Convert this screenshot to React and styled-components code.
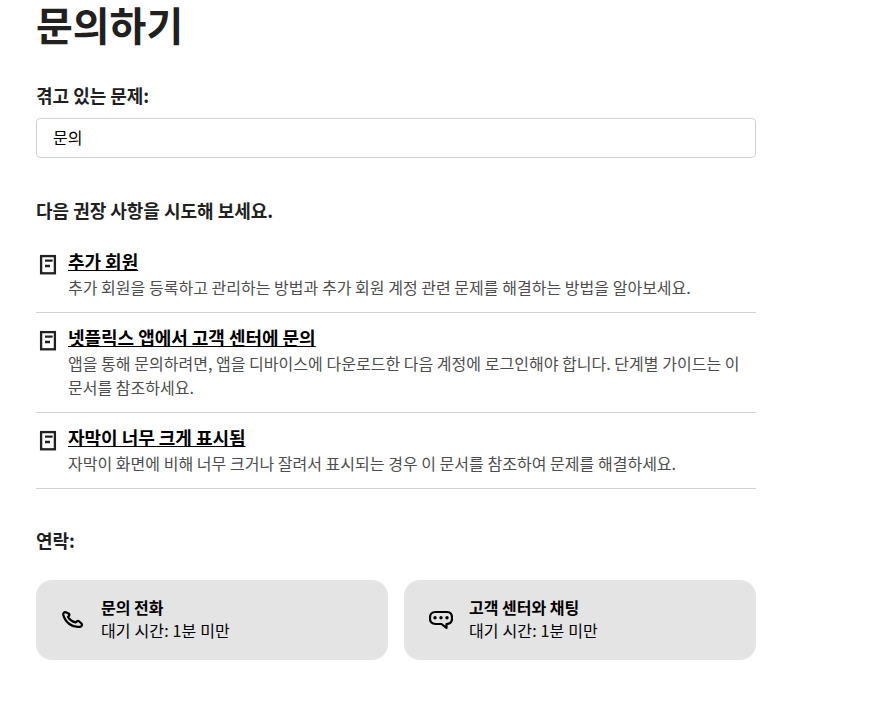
import React from 'react';
import styled, { createGlobalStyle } from 'styled-components';

const GlobalStyle = createGlobalStyle`
  body {
    margin: 0;
    background: #fff;
    font-family: "Noto Sans CJK KR", "Liberation Sans", sans-serif;
    color: #221f1f;
  }
`;

const Page = styled.main`
  width: 720px;
  margin-left: 36px;
`;

const Title = styled.h1`
  margin: 0;
  height: 52px;
  font-size: 40px;
  line-height: 48px;
  font-weight: 700;
`;

const Label = styled.h2`
  margin: ${(p) => p.$top}px 0 0;
  font-size: 18px;
  line-height: 24px;
  font-weight: 700;
  letter-spacing: -0.02px;
`;

const SearchBox = styled.div`
  box-sizing: border-box;
  height: 40px;
  margin-top: 11px;
  padding: 0 16px 2px;
  display: flex;
  align-items: center;
  border: 1px solid #d2d2d2;
  border-radius: 4px;
  font-size: 16px;
  color: #000;
`;

const ArticleList = styled.ul`
  list-style: none;
  margin: 15px 0 0;
  padding: 0;
`;

const Article = styled.li`
  display: flex;
  gap: 8px;
  padding: 11px 0 13px;
  border-bottom: 1px solid #d2d2d2;
`;

const DocIcon = styled.svg`
  flex: none;
  width: 24px;
  height: 24px;
  margin-top: 4px;
`;

const ArticleBody = styled.div`
  flex: 1;
  min-width: 0;
`;

const ArticleTitle = styled.a`
  display: block;
  width: fit-content;
  font-size: 18px;
  line-height: 27px;
  font-weight: 700;
  letter-spacing: -0.03px;
  color: #000;
  text-decoration: underline;
`;

const ArticleText = styled.p`
  margin: 0;
  font-size: 16px;
  line-height: 24px;
  letter-spacing: 0.025px;
  color: #4d4d4d;
`;

const ContactRow = styled.div`
  display: grid;
  grid-template-columns: 1fr 1fr;
  gap: 16px;
  margin-top: 28px;
`;

const ContactCard = styled.div`
  height: 80px;
  display: flex;
  align-items: center;
  gap: 16px;
  padding-left: 25px;
  border-radius: 16px;
  background: #e4e4e4;
`;

const ContactIcon = styled.svg`
  flex: none;
  width: 24px;
  height: 24px;
`;

const ContactText = styled.div`
  padding-bottom: 2px;
`;

const ContactName = styled.div`
  font-size: 16px;
  line-height: 23px;
  font-weight: 700;
  color: #000;
`;

const ContactWait = styled.div`
  font-size: 16px;
  line-height: 23px;
  letter-spacing: 0.15px;
  color: #000;
`;

const articles = [
  {
    title: '추가 회원',
    text: '추가 회원을 등록하고 관리하는 방법과 추가 회원 계정 관련 문제를 해결하는 방법을 알아보세요.',
  },
  {
    title: '넷플릭스 앱에서 고객 센터에 문의',
    text: '앱을 통해 문의하려면, 앱을 디바이스에 다운로드한 다음 계정에 로그인해야 합니다. 단계별 가이드는 이 문서를 참조하세요.',
  },
  {
    title: '자막이 너무 크게 표시됨',
    text: '자막이 화면에 비해 너무 크거나 잘려서 표시되는 경우 이 문서를 참조하여 문제를 해결하세요.',
  },
];

const Doc = () => (
  <DocIcon viewBox="0 0 24 24" fill="none" stroke="#221f1f" strokeWidth="2.3">
    <rect x="5.1" y="4.1" width="13.8" height="17.2" />
    <path d="M9 8.7h7.6M9 14h5" />
  </DocIcon>
);

const Phone = () => (
  <ContactIcon viewBox="0 0 24 24" fill="none" stroke="#000" strokeWidth="2.3" strokeLinejoin="round" strokeLinecap="round">
    <path d="M2.3 7 C1.9 5 3.2 3.8 5 4.3 L7.5 5.5 C8.6 6.1 8.6 7.1 7.9 7.9 L7 8.9 C8.6 11.6 11 13.5 14.6 14.4 L15.8 13.3 C16.6 12.7 17.6 12.9 18.2 13.5 L20.5 15.5 C21.6 16.8 20.7 18.5 19 18.8 C11 20 4.2 14 2.3 7 Z" />
  </ContactIcon>
);

const Chat = () => (
  <ContactIcon viewBox="0 0 24 24" fill="none" stroke="#000" strokeWidth="2.2" strokeLinejoin="round">
    <path d="M6.5 4 H17.5 C21 4 23 6 23 9.5 V10.5 C23 14 21 16 17.5 16 V20 L12.5 16 H6.5 C3 16 1 14 1 10.5 V9.5 C1 6 3 4 6.5 4 Z" />
    <circle cx="6" cy="9.8" r="1.7" fill="#000" stroke="none" />
    <circle cx="12" cy="9.8" r="1.7" fill="#000" stroke="none" />
    <circle cx="18" cy="9.8" r="1.7" fill="#000" stroke="none" />
  </ContactIcon>
);

export default function App() {
  return (
    <Page>
      <GlobalStyle />
      <Title>문의하기</Title>
      <Label $top={31}>겪고 있는 문제:</Label>
      <SearchBox>문의</SearchBox>
      <Label $top={40}>다음 권장 사항을 시도해 보세요.</Label>
      <ArticleList>
        {articles.map((article) => (
          <Article key={article.title}>
            <Doc />
            <ArticleBody>
              <ArticleTitle>{article.title}</ArticleTitle>
              <ArticleText>{article.text}</ArticleText>
            </ArticleBody>
          </Article>
        ))}
      </ArticleList>
      <Label $top={39}>연락:</Label>
      <ContactRow>
        <ContactCard>
          <Phone />
          <ContactText>
            <ContactName>문의 전화</ContactName>
            <ContactWait>대기 시간: 1분 미만</ContactWait>
          </ContactText>
        </ContactCard>
        <ContactCard>
          <Chat />
          <ContactText>
            <ContactName>고객 센터와 채팅</ContactName>
            <ContactWait>대기 시간: 1분 미만</ContactWait>
          </ContactText>
        </ContactCard>
      </ContactRow>
    </Page>
  );
}
